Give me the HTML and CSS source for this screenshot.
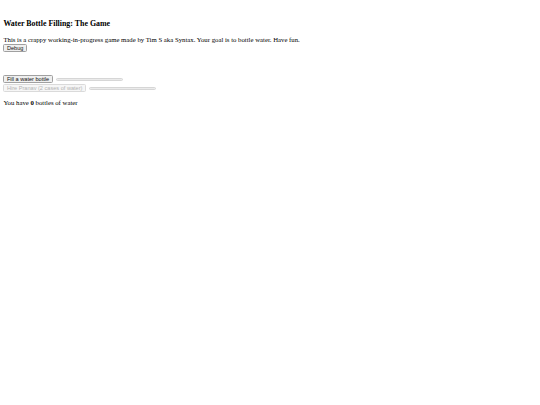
FILE: index.html
```html
<!DOCTYPE html>
<html lang="en">

<head>
    <meta charset="UTF-8">
    <title>Water Bottle Filling: The Game</title>
    <link rel="stylesheet" href="styles.css">
</head>

<body>
    <h3 class="title">Water Bottle Filling: The Game</h3>
    <div class="intro">
        <p>This is a crappy working-in-progress game made by Tim S aka Syntax. Your goal is to bottle water. Have fun.</p>
        <button class="btn">Debug</button>
    </div>
    <div class="actions">
        <div class="row">
            <button class="btn">Fill a water bottle</button>
            <div class="bar"></div>
        </div>
        <div class="row">
            <button class="btn" disabled>Hire Pranav (2 cases of water)</button>
            <div class="bar"></div>
        </div>
    </div>
    <p class="count">You have <b>0</b> bottles of water</p>
</body>

</html>
```

FILE: styles.css
```css
body {
    margin: 3.4px;
    font-family: "Liberation Serif", serif;
    font-size: 6.75px;
    color: #000;
    background: #fff;
}

.title {
    font-size: 7.9px;
    font-weight: bold;
    margin: 15.7px 0 7.9px;
}

.intro p {
    margin: 0;
}

.btn {
    display: block;
    box-sizing: border-box;
    font-family: "Liberation Sans", sans-serif;
    font-size: 5.6px;
    height: 8px;
    padding: 0 2.5px;
    line-height: 6px;
    border: 1px solid #a0a0a0;
    border-radius: 1.5px;
    background: #efefef;
    color: #111;
}

.btn:disabled {
    color: #b4b4b4;
    border-color: #dadada;
    background: #f6f6f6;
}

.intro .btn {
    margin-top: 1px;
    height: 8.4px;
}

.actions {
    margin-top: 23px;
    display: flex;
    flex-direction: column;
    gap: 0.7px;
}

.row {
    display: flex;
    align-items: center;
    gap: 3px;
}

.bar {
    width: 67.5px;
    height: 3px;
    box-sizing: border-box;
    border: 1px solid #d6d6d6;
    border-radius: 2px;
    background: #ebebeb;
}

.count {
    margin: 6.5px 0 0;
}
```
